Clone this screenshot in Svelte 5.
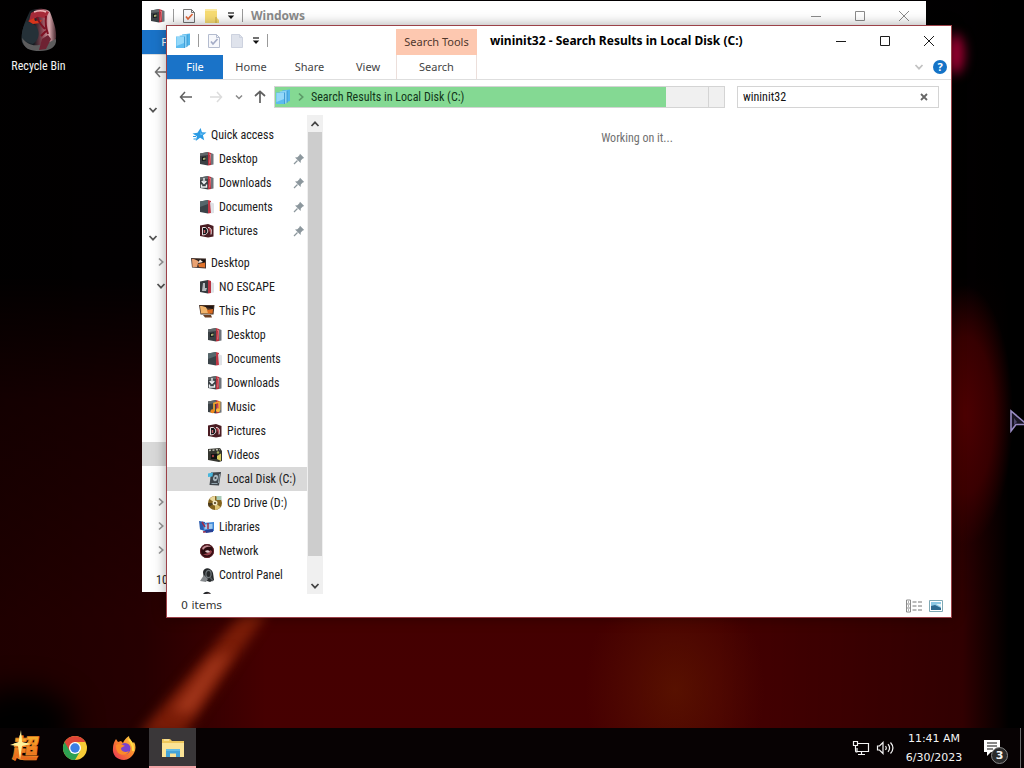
<script>
  let query = $state('wininit32');
  let selected = $state('disk');

  const quick = [
    { id: 'quick', label: 'Quick access', icon: 'star', level: 0 },
    { id: 'q-desktop', label: 'Desktop', icon: 'desktop', level: 1, pin: true },
    { id: 'q-downloads', label: 'Downloads', icon: 'downloads', level: 1, pin: true },
    { id: 'q-documents', label: 'Documents', icon: 'documents', level: 1, pin: true },
    { id: 'q-pictures', label: 'Pictures', icon: 'pictures', level: 1, pin: true }
  ];
  const places = [
    { id: 'desktop', label: 'Desktop', icon: 'wallpaper', level: 0 },
    { id: 'user', label: 'NO ESCAPE', icon: 'user', level: 1 },
    { id: 'pc', label: 'This PC', icon: 'pc', level: 1 },
    { id: 'pc-desktop', label: 'Desktop', icon: 'desktop', level: 2 },
    { id: 'pc-documents', label: 'Documents', icon: 'documents', level: 2 },
    { id: 'pc-downloads', label: 'Downloads', icon: 'downloads', level: 2 },
    { id: 'pc-music', label: 'Music', icon: 'music', level: 2 },
    { id: 'pc-pictures', label: 'Pictures', icon: 'pictures', level: 2 },
    { id: 'pc-videos', label: 'Videos', icon: 'videos', level: 2 },
    { id: 'disk', label: 'Local Disk (C:)', icon: 'disk', level: 2 },
    { id: 'cd', label: 'CD Drive (D:)', icon: 'cd', level: 2 },
    { id: 'libraries', label: 'Libraries', icon: 'libraries', level: 1 },
    { id: 'network', label: 'Network', icon: 'network', level: 1 },
    { id: 'control', label: 'Control Panel', icon: 'control', level: 1 },
    { id: 'bin', label: '', icon: 'bin', level: 1 }
  ];
  const backTree = ['down', '', '', '', '', 'gap', 'down', 'right in', 'down in', '', '', '', '', '', '', 'picked', '', 'right in', 'right in', 'right in'];
</script>

{#snippet chevron(dir)}
  <svg class="chev" width="10" height="10" viewBox="0 0 10 10" aria-hidden="true">
    <path d={dir === 'up' ? 'M1.5 7 5 3.3 8.5 7' : dir === 'right' ? 'M3 1.5 6.7 5 3 8.5' : 'M1.5 3 5 6.7 8.5 3'} fill="none" stroke="currentColor" stroke-width="1.7" />
  </svg>
{/snippet}

{#snippet folderBase()}
  <path d="M1 2.5 9 1v13.5L1 13z" fill="#3b4145" />
  <path d="M1 2.5 9 1v3L1 5z" fill="#60676a" />
  <path d="M9 1l3 1v12l-3 .5z" fill="#b5303d" />
  <path d="M12 2l2.500 1v10.500L12 14z" fill="#6f747a" />
  <path d="M10 3l1.500 .5-.8 9" fill="none" stroke="#ef8d92" stroke-width=".8" />
{/snippet}

{#snippet icon(kind)}
  <svg class="ico" width="16" height="16" viewBox="0 0 16 16" aria-hidden="true">
    {#if kind === 'star'}
      <path d="M9.600 1l1.300 4.200 4.600.200-3.600 2.900 1.300 5-4.100-2.600L4.700 14l1.200-4.700L1.500 6.500l5-.7z" fill="#2b9be4" />
      <path d="M9.300 3.500l.8 3 3 .2-3.500 1.600z" fill="#7cc8f5" />
      <path d="M2 9.500h3M2.500 12h2.500" stroke="#2b9be4" stroke-width="1" />
    {:else if kind === 'desktop'}
      {@render folderBase()}
      <path d="M3 6l4-.5v4L3 10z" fill="#161b1c" />
      <path d="M4 7l2.500-.5v2L4 9z" fill="#a9b07a" />
    {:else if kind === 'downloads'}
      {@render folderBase()}
      <path d="M5 3v5M2.800 6 5 8.500 7.300 6M2.500 9.500v2.500h5V9.500" fill="none" stroke="#eef0f2" stroke-width="1.400" />
    {:else if kind === 'documents'}
      <path d="M1 2.500 9 1v13.500L1 13z" fill="#3a4348" />
      <path d="M1 2.500 9 1v4L1 8z" fill="#56666b" />
      <path d="M9 1l3 1v12l-3 .5z" fill="#c03745" />
      <path d="M11 3l4 1.500V14l-3 .5z" fill="#dfe2e6" />
    {:else if kind === 'user'}
      <path d="M1 2.500 9 1v13.500L1 13z" fill="#353a3e" />
      <path d="M9 1l3 1v12l-3 .5z" fill="#b83442" />
      <path d="M12 3l3 1v9.500l-3 .5z" fill="#dfe2e5" />
      <path d="M4 4h2v5h2l-1 3H3z" fill="#b4b9bd" />
    {:else if kind === 'pictures'}
      <path d="M1 2.500 9 1l5.500 2v10.500L9 14.500 1 13z" fill="#4a1c22" />
      <path d="M3.500 12V4.500h3c3 2 3 5 0 7z" fill="#15181b" stroke="#e6dede" stroke-width="1" />
      <path d="M9 4.500c3 0 4 2 3 7" fill="#b4404b" stroke="#e6dede" stroke-width="1" />
      <path d="M5.500 7v3" stroke="#c9656c" stroke-width="1.500" />
    {:else if kind === 'music'}
      {@render folderBase()}
      <path d="M7 12V4.500l5.500-1.500v8" fill="none" stroke="#f5a52b" stroke-width="1.700" />
      <circle cx="5.500" cy="12.200" r="2" fill="#f18a1c" />
      <circle cx="11" cy="11.200" r="2" fill="#f7b93d" />
    {:else if kind === 'videos'}
      <path d="M1 2l12-1 2 3v10l-3 1L1 13z" fill="#34352f" />
      <path d="M2 3.500l11-1" stroke="#b9b9ad" stroke-width="1.500" stroke-dasharray="2 1.500" />
      <path d="M4 7h6v5H4z" fill="#0f1010" />
      <path d="M10 9l4-2.500V14L10 12z" fill="#d8cb5e" />
      <circle cx="6" cy="9" r="1.200" fill="#a23e40" />
      <circle cx="11" cy="5.500" r="1.200" fill="#a3ad5c" />
    {:else if kind === 'wallpaper'}
      <path d="M0 3l15 .5v10L1 12.500z" fill="#45342e" />
      <path d="M1 4l7 .3-2 7.700H1.500z" fill="#e9a272" />
      <path d="M3 4l11 .5v4.500z" fill="#17110f" />
      <path d="M7 9l7-1.500v5l-6-.5z" fill="#e0722a" />
      <path d="M9 4.500l3 2.500-5 1z" fill="#f4e9df" />
    {:else if kind === 'pc'}
      <path d="M0 2h15.500l-1 9.500H1.500z" fill="#4a3427" />
      <path d="M1 3h5l5 7.500H2z" fill="#f0b36a" />
      <path d="M3 3h11.500l-.5 3z" fill="#211613" />
      <path d="M8 7l6-1-.5 4.500H9z" fill="#dc6c20" />
      <path d="M4 12h8l1 2.500H6z" fill="#6b3f22" />
    {:else if kind === 'disk'}
      <path d="M4 1.500 14 1l-2 13.500L2.500 14z" fill="#3d444a" />
      <path d="M1 2.500l5-1-.5 4L1 6z" fill="#45b5dc" />
      <ellipse cx="8.500" cy="7" rx="2.300" ry="3.200" fill="#a7b4bb" transform="rotate(25 8.500 7)" />
      <circle cx="8.500" cy="7" r="1" fill="#394045" />
      <path d="M4.500 12.500h6M12.500 3l-1 9" stroke="#8fa1aa" stroke-width="1" />
    {:else if kind === 'cd'}
      <circle cx="8" cy="8" r="7" fill="#84631c" />
      <path d="M8 8 2.500 4A7 7 0 0 1 8 1z" fill="#e9d79a" />
      <path d="M8 8l5.500 4A7 7 0 0 1 8 15z" fill="#dcc272" />
      <path d="M8 8 2 12A7 7 0 0 1 1 8z" fill="#4b3a1b" />
      <path d="M9.500 1h5v4h-5z" fill="#a8cbb7" />
      <circle cx="8" cy="8" r="2.500" fill="#f0e6c6" />
      <circle cx="8" cy="8" r="1.100" fill="#50401c" />
    {:else if kind === 'libraries'}
      <path d="M0 2l6 1v9l-5-1.500z" fill="#2b5cae" />
      <path d="M4 4l11-1v9L5 13.500z" fill="#3c86d8" />
      <path d="M5.500 5.500l8-.7v5l-8 .8z" fill="#9fc9ee" />
      <path d="M3 3l3 5M9 4v6M4 13l9-1" stroke="#a02c47" stroke-width="1.500" />
      <path d="M6 11l8-1v3l-7 1z" fill="#283f94" />
    {:else if kind === 'network'}
      <circle cx="8" cy="8" r="7" fill="#2b0b0f" />
      <path d="M3 5c3-4 8-3 9-1-3-1-6 0-8 3z" fill="#c58c92" />
      <path d="M13 8c0 4-5 6-9 3 4 0 6-1 7-4z" fill="#96404a" />
      <path d="M6 8c2-1 4-1 5 1-2 1-4 1-5-1z" fill="#e3c8cb" />
      <circle cx="8" cy="8" r="6.500" fill="none" stroke="#65222b" stroke-width="1" />
    {:else if kind === 'control'}
      <path d="M4 5c1-5 8-5 10 1l1 7-4 2-6-2z" fill="#25282a" />
      <path d="M1 14l4-6 4 4-2 3z" fill="#84888b" />
      <ellipse cx="9.500" cy="7" rx="2.600" ry="3.600" fill="none" stroke="#70777a" stroke-width="1.200" />
      <path d="M11 10l3 4" stroke="#54585b" stroke-width="1.500" />
    {:else}
      <path d="M3 6C4-1 12-1 13 6l1 8H2z" fill="#25282b" />
      <path d="M7 3l3-1 1 1z" fill="#7c6066" />
    {/if}
  </svg>
{/snippet}

{#snippet docIcon(check, tone)}
  <svg width="16" height="16" viewBox="0 0 16 16" aria-hidden="true">
    <path d="M2.500 1.500h8l3 3v10h-11z" fill={check ? '#f7f8fb' : '#dfe3ec'} stroke={tone} />
    <path d="M10.500 1.500v3h3" fill="none" stroke={tone} />
    {#if check}<path d="M5 8.500l2 2.500 4.500-5" fill="none" stroke={tone === '#737373' ? '#dc6538' : '#a4acc6'} stroke-width="1.700" />{/if}
  </svg>
{/snippet}

{#snippet menuArrow()}
  <svg width="8" height="8" viewBox="0 0 8 8" aria-hidden="true"><path d="M1 1h6" stroke="#111" stroke-width="1.200" /><path d="M.8 3.500h6.400L4 7z" fill="#111" /></svg>
{/snippet}

{#snippet results()}
  <svg width="16" height="16" viewBox="0 0 16 16" aria-hidden="true">
    <path d="M7 1.500l8-1V12l-3 1z" fill="#52b5ea" />
    <path d="M4.500 2.500l7.500-1V14l-3 1z" fill="#8ed3f6" />
    <path d="M1 3.500h8.500V15H1z" fill="#5cbcf0" />
    <path d="M1.500 4h7.500v6l-7.500 3z" fill="#94d8f9" />
    <path d="M9.500 3.500V15M12 2v12" stroke="#2c8cc9" stroke-width=".7" />
  </svg>
{/snippet}

{#snippet windowButtons()}
  <div class="controls">
    <button aria-label="Minimize"><svg width="12" height="12" viewBox="0 0 12 12"><path d="M1 6.500h10" stroke="currentColor" /></svg></button>
    <button aria-label="Maximize"><svg width="12" height="12" viewBox="0 0 12 12"><path d="M1.500 1.500h9v9h-9z" fill="none" stroke="currentColor" /></svg></button>
    <button aria-label="Close"><svg width="12" height="12" viewBox="0 0 12 12"><path d="M1 1l10 10M11 1 1 11" stroke="currentColor" /></svg></button>
  </div>
{/snippet}

{#snippet treeRow(item)}
  <button class="node level{item.level}" class:selected={selected === item.id} onclick={() => (selected = item.id)} aria-label={item.label || 'Recycle Bin'}>
    {@render icon(item.icon)}
    <span>{item.label}</span>
    {#if item.pin}
      <svg class="pin" width="12" height="12" viewBox="0 0 12 12" aria-hidden="true">
        <path d="M7 .8 11.200 5 9.800 5.600 7.800 7.600 7.600 10 2 4.400 4.400 4.200 6.400 2.200z" fill="#8c979d" />
        <path d="M4.500 7.500 1 11" stroke="#8c979d" stroke-width="1.300" />
      </svg>
    {/if}
  </button>
{/snippet}

<div class="screen">
  <main class="desktop">
    <svg class="wallpaper" viewBox="0 0 1024 728" preserveAspectRatio="none" aria-hidden="true">
      <defs>
        <filter id="mid" x="-100%" y="-100%" width="300%" height="300%" color-interpolation-filters="sRGB"><feGaussianBlur stdDeviation="14" /></filter>
        <filter id="fine" x="-100%" y="-100%" width="300%" height="300%" color-interpolation-filters="sRGB"><feGaussianBlur stdDeviation="6" /></filter>
        <linearGradient id="base" x1="0" y1="0" x2="0" y2="1">
          <stop offset="0" stop-color="#020001" /><stop offset=".38" stop-color="#030001" /><stop offset=".55" stop-color="#2b0002" /><stop offset=".85" stop-color="#440001" /><stop offset="1" stop-color="#460001" />
        </linearGradient>
        <linearGradient id="sides" x1="0" y1="0" x2="1" y2="0">
          <stop offset="0" stop-color="#000" stop-opacity=".55" /><stop offset=".14" stop-color="#000" stop-opacity=".45" /><stop offset=".26" stop-color="#000" stop-opacity="0" />
          <stop offset=".7" stop-color="#000" stop-opacity="0" /><stop offset=".94" stop-color="#000" stop-opacity=".3" /><stop offset=".985" stop-color="#000" stop-opacity="1" />
        </linearGradient>
        <radialGradient id="ember"><stop offset="0" stop-color="#5c1500" stop-opacity=".8" /><stop offset="1" stop-color="#5c1200" stop-opacity="0" /></radialGradient>
        <radialGradient id="glow"><stop offset="0" stop-color="#4c0002" /><stop offset=".6" stop-color="#440001" stop-opacity=".75" /><stop offset="1" stop-color="#400001" stop-opacity="0" /></radialGradient>
      </defs>
      <rect width="1024" height="728" fill="url(#base)" />
      <ellipse cx="675" cy="690" rx="90" ry="120" fill="url(#ember)" />
      <rect width="1024" height="728" fill="url(#sides)" />
      <ellipse cx="965" cy="415" rx="48" ry="130" fill="url(#glow)" />
      <ellipse cx="20" cy="725" rx="55" ry="38" fill="#000" filter="url(#mid)" />
      <path d="M243 612 268 612 184 735 138 735z" fill="#7a1c07" filter="url(#fine)" />
      <path d="M212 660 232 650 192 712 172 712z" fill="#a2361b" filter="url(#fine)" />
      <ellipse cx="955" cy="54" rx="9" ry="20" fill="#a80034" filter="url(#fine)" />
    </svg>

    <a class="shortcut" href="#bin">
      <svg width="44" height="48" viewBox="0 0 44 48" aria-hidden="true">
        <defs>
          <linearGradient id="binBody" x1="0" x2="1"><stop offset="0" stop-color="#2b373d" /><stop offset=".35" stop-color="#141a1f" /><stop offset=".6" stop-color="#8a4552" /><stop offset=".8" stop-color="#d9a9ae" /><stop offset="1" stop-color="#46272e" /></linearGradient>
        </defs>
        <path d="M13 3c5-3 17-3 20 1 3 8 7 18 6 26-2 9-8 11-16 11S7 40 5 34C3 26 8 13 13 3z" fill="url(#binBody)" />
        <path d="M5 30c5 6 10 8 17 7 8-1 12-4 17-6 1 8-6 12-16 12S6 41 5 30z" fill="#5d5c5d" />
        <path d="M9 14c6 0 10 3 12 8 2 6-1 11-5 14-5-1-9-4-11-8 0-5 1-9 4-14z" fill="#253138" />
        <path d="M14 5c6-3 12-3 18-1l-3 6-8-1-9 4z" fill="#a52a38" />
        <path d="M11 13l6-3 1 3 7-1-2 3-7 1z" fill="#d8351b" />
        <path d="M20 9c2 6 5 9 8 12M29 8c-1 8 0 13 2 18M24 28l5-5" fill="none" stroke="#7d1022" stroke-width="2" />
        <path d="M25 31l6-4 3 4-5 10-7 1z" fill="#6e2232" />
        <path d="M17 4c5-2 10-1 12 0" stroke="#f0b7b9" stroke-width="1.500" fill="none" />
      </svg>
      <span>Recycle Bin</span>
    </a>

    <section class="window back" aria-label="Windows">
      <header class="titlebar">
        <div class="qat">
          {@render icon('desktop')}
          <i class="rule"></i>
          {@render docIcon(true, '#737373')}
          <svg width="16" height="16" viewBox="0 0 16 16" aria-hidden="true"><path d="M1 1h12v9l2 2v3H1z" fill="#f7dc73" /><path d="M12 9v6" stroke="#c9a840" /><path d="M1 1h12v2H1z" fill="#fbe9a0" /></svg>
          {@render menuArrow()}
          <i class="rule"></i>
        </div>
        <h2>Windows</h2>
        {@render windowButtons()}
      </header>
      <div class="tabs"><button class="file">File</button></div>
      <div class="toolbar">
        <button class="nav" aria-label="Back"><svg width="14" height="12" viewBox="0 0 14 12"><path d="M6 1 1.500 6 6 11M1.500 6H13" fill="none" stroke="#707070" stroke-width="1.500" /></svg></button>
      </div>
      <div class="backtree">
        {#each backTree as row}
          <div class="backrow {row}">
            {#if row.startsWith('down')}{@render chevron('down')}{:else if row.startsWith('right')}{@render chevron('right')}{/if}
          </div>
        {/each}
      </div>
      <footer>10</footer>
    </section>

    <section class="window front" aria-label="Search Results">
      <header class="titlebar">
        <div class="qat">
          {@render results()}
          <i class="rule"></i>
          {@render docIcon(true, '#b4bccf')}
          {@render docIcon(false, '#cdd2df')}
          {@render menuArrow()}
          <i class="rule"></i>
        </div>
        <div class="context">Search Tools</div>
        <h1>wininit32 - Search Results in Local Disk (C:)</h1>
        {@render windowButtons()}
      </header>
      <div class="tabs">
        <button class="file">File</button>
        <button>Home</button>
        <button class="wide">Share</button>
        <button>View</button>
        <button class="search-tab">Search</button>
        <span class="spacer"></span>
        <button class="mini" aria-label="Expand the ribbon">{@render chevron('down')}</button>
        <button class="help" aria-label="Help">?</button>
      </div>
      <div class="toolbar">
        <button class="nav" aria-label="Back"><svg width="14" height="12" viewBox="0 0 14 12"><path d="M6 1 1.500 6 6 11M1.500 6H13" fill="none" stroke="#606060" stroke-width="1.500" /></svg></button>
        <button class="nav" aria-label="Forward"><svg width="14" height="12" viewBox="0 0 14 12"><path d="M8 1 12.500 6 8 11M12.500 6H1" fill="none" stroke="#dcdcdc" stroke-width="1.500" /></svg></button>
        <button class="nav recent" aria-label="Recent locations"><svg width="8" height="8" viewBox="0 0 8 8"><path d="M1 2.500l3 3 3-3" fill="none" stroke="#888" stroke-width="1.500" /></svg></button>
        <button class="nav" aria-label="Up"><svg width="12" height="14" viewBox="0 0 12 14"><path d="M1 6 6 1.500 11 6M6 1.500V13" fill="none" stroke="#606060" stroke-width="1.700" /></svg></button>
        <div class="address">
          <div class="crumb">
            {@render results()}
            {@render chevron('right')}
            <span>Search Results in Local Disk (C:)</span>
          </div>
          <button class="refresh" aria-label="Refresh"></button>
        </div>
        <div class="searchbox">
          <label for="query" class="hidden" aria-label="Search"></label>
          <input id="query" bind:value={query} size="1" autofocus />
          <button aria-label="Clear" onclick={() => (query = '')}><svg width="8" height="8" viewBox="0 0 8 8"><path d="M1 1l6 6M7 1 1 7" stroke="#666" stroke-width="1.800" /></svg></button>
        </div>
      </div>
      <div class="content">
        <nav aria-label="Folders">
          <div class="group">{#each quick as item}{@render treeRow(item)}{/each}</div>
          <div class="group">{#each places as item}{@render treeRow(item)}{/each}</div>
        </nav>
        <div class="scroll">
          <button aria-label="Scroll up">{@render chevron('up')}</button>
          <div class="thumb"></div>
          <div class="track"></div>
          <button aria-label="Scroll down">{@render chevron('down')}</button>
        </div>
        <p class="working">Working on it...</p>
      </div>
      <footer>
        <span>0 items</span>
        <button aria-label="Details view">
          <svg width="18" height="14" viewBox="0 0 18 14"><path d="M1.500 1v12h4V1zM1.500 5h4M1.500 9h4" fill="none" stroke="#8b8b8b" /><path d="M3 3h1M3 7h1M3 11h1" stroke="#666" /><path d="M7.500 3h4M13 3h4M7.500 7h4M13 7h4M7.500 11h4M13 11h4" stroke="#777" /></svg>
        </button>
        <button aria-label="Large icons view">
          <svg width="14" height="12" viewBox="0 0 14 12"><path d="M.5 .5h13v11H.5z" fill="#fff" stroke="#7fa9b5" /><path d="M2 2h10v8H2z" fill="#8dc9e4" /><path d="M2 6l4-1 6 3v2H2z" fill="#2e6a8f" /><path d="M7 4h5v3z" fill="#e0f1f7" /></svg>
        </button>
      </footer>
    </section>

    <svg class="cursor" width="15" height="26" viewBox="0 0 15 26" aria-hidden="true">
      <path d="M2 4v20l5-6.500h11z" fill="#191524" stroke="#9a8cc4" stroke-width="1.600" />
      <path d="M5 11v7l3-3z" fill="#4b4468" />
    </svg>
  </main>

  <footer class="taskbar">
    <button class="task" aria-label="Start">
      <svg width="34" height="36" viewBox="0 0 34 36">
        <defs><linearGradient id="fire" x1="0" y1="0" x2="0" y2="1"><stop offset="0" stop-color="#f8d235" /><stop offset=".5" stop-color="#f28a22" /><stop offset="1" stop-color="#e2521a" /></linearGradient></defs>
        <g transform="translate(3 28) skewX(-6)">
          <text x="0" y="0" font-family="Noto Sans CJK JP, sans-serif" font-weight="900" font-size="26" fill="url(#fire)" stroke="#f08424" stroke-width=".8">超</text>
        </g>
        <path d="M12 0l1 12 9 2-9 2-2 14-2-14-8-1 8.500-3z" fill="#fff29a" />
      </svg>
    </button>
    <button class="task" aria-label="Chrome">
      <svg width="26" height="26" viewBox="0 0 26 26">
        <circle cx="13" cy="13" r="12" fill="#f8cc36" />
        <path d="M13 13 2.600 7A12 12 0 0 0 13 25l5.200-9z" fill="#2da152" />
        <path d="M2.600 7A12 12 0 0 1 23.400 7H13L7.800 16z" fill="#dd4436" />
        <circle cx="13" cy="13" r="6" fill="#fff" /><circle cx="13" cy="13" r="4.700" fill="#3b7fe4" />
      </svg>
    </button>
    <button class="task" aria-label="Firefox">
      <svg width="26" height="26" viewBox="0 0 26 26">
        <defs><linearGradient id="fox" x1="1" y1="0" x2="0" y2="1"><stop offset="0" stop-color="#ffe04a" /><stop offset=".5" stop-color="#fb7f2c" /><stop offset="1" stop-color="#e62f5c" /></linearGradient></defs>
        <path d="M5 4l2 3 3-1 2 2c1-3 3-5 6-7 0 3 2 4 4 7l1-1c2 3 2 8 0 11-2 4-6 7-10 7C6 25 1 20 2 13c0-3 1-6 3-9z" fill="url(#fox)" />
        <circle cx="14" cy="13.500" r="5.500" fill="#7942cf" />
        <path d="M5 10c3-2 6-1 9 1-2 1-4 1-4 3 1 3 5 4 8 2-2 5-10 5-12 0-1-2-1-4-1-6z" fill="#fb8a2a" />
        <path d="M18 4c2 4 5 6 4 12" fill="none" stroke="#ffdb45" stroke-width="2" />
      </svg>
    </button>
    <button class="task active" aria-label="File Explorer">
      <svg width="24" height="22" viewBox="0 0 24 22">
        <path d="M1 2h8l2 2h12v16H1z" fill="#eec75c" />
        <path d="M1 6h22v14H1z" fill="#fbe396" />
        <path d="M3 3h5" stroke="#fff3c5" stroke-width="1" />
        <path d="M5 12h14v8h-4v-3.500H9V20H5z" fill="#44a4d8" />
        <path d="M5 12h14v2H5z" fill="#62bbe5" />
      </svg>
    </button>
    <span class="spacer"></span>
    <button class="tray" aria-label="Network">
      <svg width="18" height="16" viewBox="0 0 18 16"><path d="M6 3.500h10.500v8H5V8M9.500 12v2.500M6 14.500h7" fill="none" stroke="#f4f4f4" stroke-width="1.200" /><path d="M1.500 1.500h4v4h-4zM3.500 5.500V9c0 3 0 3 2 3" fill="none" stroke="#f4f4f4" stroke-width="1.200" /></svg>
    </button>
    <button class="tray" aria-label="Volume">
      <svg width="18" height="16" viewBox="0 0 18 16"><path d="M1.500 6h2L7 2.500v11L3.500 10h-2z" fill="none" stroke="#f4f4f4" stroke-width="1.200" /><path d="M9.500 6c1 1.300 1 2.700 0 4M12 4.200c2 2.400 2 5.200 0 7.600M14.500 2.500c3 3.400 3 7.600 0 11" fill="none" stroke="#f4f4f4" stroke-width="1.200" /></svg>
    </button>
    <button class="clock"><time>11:41 AM</time><time>6/30/2023</time></button>
    <button class="notice" aria-label="Notifications, 3 new">
      <svg width="18" height="18" viewBox="0 0 18 18"><path d="M1 1h16v12H8l-4 4v-4H1z" fill="#fff" /><path d="M4 4h10M4 7h10M4 10h6" stroke="#111" stroke-width="1.200" /></svg>
      <b>3</b>
    </button>
    <button class="peek" aria-label="Show desktop"></button>
  </footer>
</div>

<style>
  :global(body) { margin: 0; background: #000; }
  .screen {
    --ui: "Roboto Condensed", "Liberation Sans", sans-serif;
    --ribbon: "Noto Sans", sans-serif;
    --wide: "DejaVu Sans", sans-serif;
    display: flex; flex-direction: column; height: 100vh; min-height: 640px; overflow: hidden;
    font: 12px/16px var(--ui); color: #1b1b1b;
  }
  button, input { font: inherit; color: inherit; border: 0; padding: 0; margin: 0; background: none; border-radius: 0; outline: none; }
  svg { display: block; flex: none; }
  h1, h2, p { margin: 0; font-size: inherit; }
  .spacer { flex: 1; }

  .desktop { position: relative; flex: 1; min-height: 0; overflow: hidden; }
  .wallpaper { position: absolute; inset: 0; width: 100%; height: 100%; }
  .shortcut {
    position: relative; display: flex; flex-direction: column; align-items: center; width: 77px; gap: 2px;
    padding-top: 8px; color: #f2f2f2; text-decoration: none; text-shadow: 0 1px 2px #000;
  }

  .window { position: absolute; display: flex; flex-direction: column; background: #fff; }
  .back { inset: 1px 98px 136px 142px; }
  .front { inset: 25px 72px 110px 166px; border: 1px solid #9c4148; box-shadow: 0 0 12px rgba(0, 0, 0, .35); }
  .titlebar { display: flex; align-items: center; height: 29px; }
  .back .titlebar { color: #8b8b8b; }
  .qat { display: flex; align-items: center; gap: 7px; padding-left: 8px; }
  .front .qat { flex: 0 0 221px; }
  .qat .rule { width: 1px; height: 13px; background: #9a9a9a; }
  .context {
    align-self: stretch; display: flex; align-items: center; justify-content: center; width: 81px; margin-top: 3px;
    background: #fdc8b0; color: #50372c; font: 11px/16px var(--ribbon);
  }
  h1, h2 { font: 700 12px/16px var(--ribbon); white-space: nowrap; }
  h1 { padding-left: 13px; color: #000; }
  h2 { padding-left: 8px; }
  .controls { display: flex; margin-left: auto; align-self: stretch; }
  .controls button { display: grid; place-items: center; width: 44px; }

  .tabs { display: flex; align-items: stretch; height: 24px; font: 11px/16px var(--ribbon); color: #444; border-bottom: 1px solid #dedede; }
  .tabs button { width: 56px; text-align: center; }
  .tabs .wide { width: 61px; }
  .tabs .file { background: #1a73c8; color: #fff; }
  .tabs .search-tab { width: 81px; border: 1px solid #ecdfdb; border-width: 0 1px; box-sizing: border-box; }
  .tabs .mini { display: grid; place-items: center; width: 20px; color: #c2c2c2; }
  .tabs .help { width: 14px; height: 14px; margin: 5px 4px; border-radius: 50%; background: #1473c7; color: #fff; font: 700 11px/14px var(--ribbon); }

  .toolbar { display: flex; align-items: center; height: 35px; padding: 0 12px 2px; box-sizing: border-box; }
  .toolbar .nav { display: grid; place-items: center; width: 14px; margin-right: 16px; }
  .toolbar .nav:nth-of-type(2) { margin-right: 6px; }
  .toolbar .recent { width: 8px; margin-right: 10px; margin-left: 6px; }
  .toolbar .nav:nth-of-type(4) { margin-right: 7px; }
  .address { flex: 1; display: flex; height: 20px; border: 1px solid #d4d4d4; background: linear-gradient(90deg, #84d993 87%, #f0f0f0 87%); }
  .crumb { flex: 1; display: flex; align-items: center; gap: 5px; color: #12351a; white-space: nowrap; }
  .crumb :global(.chev) { color: #5c9a68; }
  .refresh { width: 16px; border-left: 1px solid #d4d4d4; }
  .searchbox { display: flex; align-items: center; width: 200px; height: 20px; margin-left: 12px; border: 1px solid #d4d4d4; }
  .hidden { width: 0; overflow: hidden; }
  .searchbox input { flex: 1; min-width: 0; padding-left: 5px; color: #111; }
  .searchbox button { display: grid; place-items: center; width: 28px; height: 20px; }

  .content { flex: 1; display: flex; min-height: 0; }
  nav { width: 140px; overflow: hidden; padding-top: 8px; box-sizing: border-box; }
  .group + .group { margin-top: 8px; }
  .node { display: flex; align-items: center; gap: 4px; width: 100%; height: 24px; padding: 0 2px 0 24px; text-align: left; white-space: nowrap; }
  .node.level1 { padding-left: 32px; }
  .node.level2 { padding-left: 40px; }
  .node.selected { background: #d9d9d9; }
  .pin { margin-left: auto; }
  .scroll { display: flex; flex-direction: column; width: 16px; background: #f0f0f0; color: #444; }
  .scroll button { display: grid; place-items: center; height: 17px; }
  .thumb { flex: 425; margin: 0 1px; background: #cdcdcd; }
  .track { flex: 21; }
  .working { flex: 1; padding-top: 15px; text-align: center; color: #707070; }
  .front footer { display: flex; align-items: center; gap: 6px; height: 23px; padding: 0 8px 0 14px; font: 11px/16px var(--wide); color: #333; }
  .front footer span { flex: 1; }

  .back .file { width: 56px; }
  .backtree { flex: 1; padding-top: 8px; min-height: 0; overflow: hidden; color: #555; }
  .backrow { display: flex; align-items: center; height: 24px; padding-left: 6px; }
  .backrow.in { padding-left: 14px; }
  .backrow.right { color: #999; }
  .backrow.gap { height: 8px; }
  .backrow.picked { background: #d9d9d9; }
  .back footer { height: 24px; line-height: 24px; padding-left: 14px; }

  .cursor { position: absolute; right: 0; top: 407px; }

  .taskbar { display: flex; align-items: stretch; height: 40px; padding-left: 2px; background: #070203; color: #f4f4f4; font: 11px/19px var(--wide); }
  .taskbar button { display: grid; place-items: center; }
  .task { width: 47px; margin-right: 2px; }
  .task.active { background: #3a3739; box-shadow: inset 0 -2px #f0a3a6; }
  .tray { width: 24px; }
  .taskbar .clock { align-content: center; width: 74px; }
  .taskbar .notice { position: relative; width: 42px; }
  .notice b { position: absolute; right: 5px; bottom: 4px; width: 15px; height: 15px; border: 1px solid #888; border-radius: 50%; background: #2b2b2b; font: 700 11px/15px var(--wide); text-align: center; }
  .peek { width: 4px; border-left: 1px solid #6a6a6a; margin-left: 7px; }
</style>
